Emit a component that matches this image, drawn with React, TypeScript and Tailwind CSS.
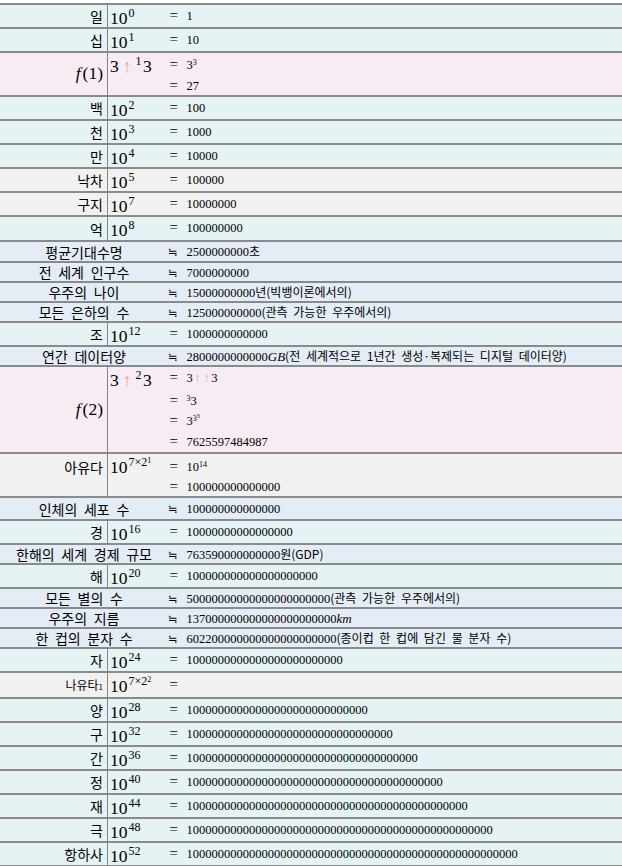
import React from 'react';

const serif = "font-['Liberation_Serif','DejaVu_Serif',serif]";
const kr = "font-['Noto_Sans_CJK_KR','Noto_Sans',sans-serif]";

type Kind = 'unit' | 'gray' | 'f' | 'approx';

const BG: Record<Kind, string> = {
  unit: 'bg-[#e5f3f4]',
  gray: 'bg-[#f1f1f1]',
  f: 'bg-[#f8ecf4]',
  approx: 'bg-[#e4ecf6]',
};

type Row = {
  kind: Kind;
  label: React.ReactNode;
  math?: React.ReactNode;
  lines: React.ReactNode[];
  h: string;
  lh?: string[];
  labelCls?: string;
};

const Arrow = ({ big }: { big?: boolean }) => (
  <span className={`text-[#eba57a] ${big ? 'text-[17.5px] mx-[4px]' : 'text-[12.5px] mx-[1.5px]'}`}>↑</span>
);

const P10 = ({ e }: { e: React.ReactNode }) => (
  <span className={`${serif} text-[17.5px] leading-[18px] text-black whitespace-nowrap`}>
    10
    <span className="relative top-[-7px] ml-[1px] text-[12px]">{e}</span>
  </span>
);

const Eq = () => (
  <span className={`${serif} inline-block w-[18.5px] pl-[1.5px] text-[15px]`}>=</span>
);
const Ap = () => (
  <span className="inline-block w-[18.5px] font-['DejaVu_Sans',sans-serif] text-[12px]">≒</span>
);
const N = ({ children }: { children: React.ReactNode }) => (
  <span className={`${serif} text-[12.5px]`}>{children}</span>
);
const K = ({ children }: { children: React.ReactNode }) => (
  <span className={`${kr} text-[12px] [word-spacing:3px]`}>{children}</span>
);
const I = ({ children }: { children: React.ReactNode }) => (
  <span className={`${serif} italic text-[13px]`}>{children}</span>
);

const zeros = (n: number) => '0'.repeat(n);

const eqLine = (v: React.ReactNode) => (
  <>
    <Eq />
    {v}
  </>
);
const apLine = (v: React.ReactNode) => (
  <>
    <Ap />
    {v}
  </>
);

const fLabel = (n: string) => (
  <span className={`${serif} text-[17.5px] whitespace-nowrap`}>
    <span className="italic mr-[2px]">f</span>({n})
  </span>
);

const knuth = (n: string) => (
  <span className={`${serif} text-[17.5px] leading-[18px] whitespace-nowrap`}>
    3<Arrow big />
    <span className="relative top-[-7px] text-[12px] mr-[1.5px]">{n}</span>3
  </span>
);

const unit = (label: string, e: string, digits: number, gray = false): Row => ({
  kind: gray ? 'gray' : 'unit',
  label,
  math: <P10 e={e} />,
  lines: [eqLine(<N>{'1' + zeros(digits)}</N>)],
  h: 'h-[24px]',
});

const approx = (label: string, v: React.ReactNode, h = 'h-[20px]'): Row => ({
  kind: 'approx',
  label,
  lines: [apLine(v)],
  h,
  lh: ['h-[17px]'],
});

const rows: Row[] = [
  unit('일', '0', 0),
  unit('십', '1', 1),
  {
    kind: 'f',
    label: fLabel('1'),
    math: knuth('1'),
    lines: [
      eqLine(
        <N>
          3<span className="relative top-[-4px] text-[8px]">3</span>
        </N>
      ),
      eqLine(<N>27</N>),
    ],
    h: 'h-[44px]',
    lh: ['h-[20px]', 'h-[20px]'],
  },
  unit('백', '2', 2),
  unit('천', '3', 3),
  unit('만', '4', 4),
  unit('낙차', '5', 5, true),
  unit('구지', '7', 7, true),
  { ...unit('억', '8', 8), h: 'h-[25px]' },
  approx('평균기대수명', <><N>2500000000</N><K>초</K></>, 'h-[21px]'),
  approx('전 세계 인구수', <N>7000000000</N>),
  approx('우주의 나이', <><N>15000000000</N><K>년(빅뱅이론에서의)</K></>),
  approx('모든 은하의 수', <><N>125000000000</N><K>(관측 가능한 우주에서의)</K></>),
  unit('조', '12', 12),
  approx(
    '연간 데이터양',
    <>
      <N>2800000000000</N>
      <I>GB</I>
      <K>(전 세계적으로 1년간 생성·복제되는 디지털 데이터양)</K>
    </>
  ),
  {
    kind: 'f',
    label: fLabel('2'),
    math: knuth('2'),
    lines: [
      eqLine(
        <N>
          3<Arrow />
          <Arrow />3
        </N>
      ),
      eqLine(
        <N>
          <span className="relative top-[-4px] text-[8px]">3</span>3
        </N>
      ),
      eqLine(
        <N>
          3
          <span className="relative top-[-4px] text-[8px]">
            3<span className="relative top-[-3px] text-[6px]">3</span>
          </span>
        </N>
      ),
      eqLine(<N>7625597484987</N>),
    ],
    h: 'h-[87px]',
    lh: ['h-[18px]', 'h-[24px]', 'h-[21px]', 'h-[19px]'],
  },
  {
    kind: 'gray',
    label: '아유다',
    labelCls: 'items-start pt-[6px]',
    math: (
      <P10
        e={
          <>
            7×2<span className="relative top-[-3px] text-[8px]">1</span>
          </>
        }
      />
    ),
    lines: [
      eqLine(
        <N>
          10<span className="relative top-[-4px] text-[8px]">14</span>
        </N>
      ),
      eqLine(<N>{'1' + zeros(14)}</N>),
    ],
    h: 'h-[44px]',
    lh: ['h-[21px]', 'h-[19px]'],
  },
  { ...approx('인체의 세포 수', <N>{'1' + zeros(14)}</N>, 'h-[23px]'), lh: ['h-[18px]'] },
  unit('경', '16', 16),
  approx('한해의 세계 경제 규모', <><N>763590000000000</N><K>원(GDP)</K></>),
  unit('해', '20', 20),
  approx('모든 별의 수', <><N>{'5' + zeros(22)}</N><K>(관측 가능한 우주에서의)</K></>),
  approx('우주의 지름', <><N>{'137' + zeros(21)}</N><I>km</I></>),
  approx('한 컵의 분자 수', <><N>{'6022' + zeros(20)}</N><K>(종이컵 한 컵에 담긴 물 분자 수)</K></>),
  unit('자', '24', 24),
  {
    kind: 'gray',
    label: (
      <span className="text-[12px]">
        나유타<span className="text-[8px]">1</span>
      </span>
    ),
    math: (
      <P10
        e={
          <>
            7×2<span className="relative top-[-3px] text-[8px]">2</span>
          </>
        }
      />
    ),
    lines: [<Eq />],
    h: 'h-[26px]',
    lh: ['h-[18px]'],
  },
  unit('양', '28', 28),
  unit('구', '32', 32),
  unit('간', '36', 36),
  unit('정', '40', 40),
  unit('재', '44', 44),
  unit('극', '48', 48),
  unit('항하사', '52', 52),
];

function Lines({ row }: { row: Row }) {
  return (
    <div className="flex flex-1 flex-col pl-0 min-w-0">
      {row.lines.map((l, i) => (
        <div key={i} className={`flex items-end ${row.lh?.[i] ?? 'h-[18px]'}`}>
          <span className="leading-[13px] whitespace-nowrap text-black">{l}</span>
        </div>
      ))}
    </div>
  );
}

export default function App() {
  return (
    <div className="w-[622px] bg-white pt-[3px] text-black">
      <div className="border-b-2 border-[#8a8a8a]">
        {rows.map((r, idx) => (
          <div
            key={idx}
            className={`flex border-t-2 border-[#8a8a8a] box-border ${r.h} ${BG[r.kind]}`}
          >
            {r.kind === 'approx' ? (
              <div
                className={`w-[168px] shrink-0 flex items-center justify-center ${kr} text-[14px] leading-none [word-spacing:3.5px] whitespace-nowrap`}
              >
                {r.label}
              </div>
            ) : (
              <>
                <div
                  className={`w-[108px] shrink-0 border-r border-[#858585] flex justify-end pr-[4px] ${
                    r.labelCls ?? 'items-center'
                  } ${kr} text-[14px] leading-none whitespace-nowrap`}
                >
                  {r.label}
                </div>
                <div className="w-[60px] shrink-0 flex items-start pt-[4px] pl-[2px]">{r.math}</div>
              </>
            )}
            <Lines row={r} />
          </div>
        ))}
      </div>
    </div>
  );
}
